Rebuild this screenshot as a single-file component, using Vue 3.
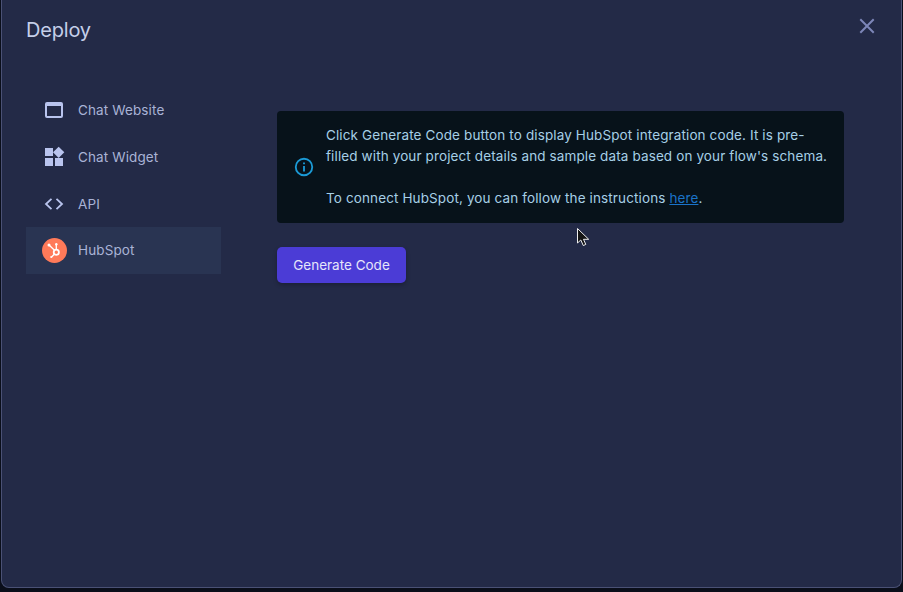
<template>
  <div class="backdrop">
    <section class="modal">
      <header class="head">
        <h2 class="title">Deploy</h2>
        <button class="close" aria-label="Close">
          <svg width="24" height="24" viewBox="0 0 24 24" fill="none" stroke="#7d86b8" stroke-width="2" stroke-linecap="square"><path d="M6 6 18 18M18 6 6 18" /></svg>
        </button>
      </header>
      <div class="body">
        <nav class="side">
          <a class="item">
            <span class="ico"><svg width="24" height="24" viewBox="0 0 24 24" fill="#b9c4ee"><path d="M5 4h14a2 2 0 0 1 2 2v12a2 2 0 0 1-2 2H5a2 2 0 0 1-2-2V6a2 2 0 0 1 2-2Zm0 4v10h14V8H5Z" /></svg></span>
            <span>Chat Website</span>
          </a>
          <a class="item">
            <span class="ico"><svg width="24" height="24" viewBox="0 0 24 24" fill="#b9c4ee"><path d="M3 3h8v8H3zM3 13h8v8H3zM13 13h8v8h-8zM16.66 1.69l5.66 5.65L16.66 13 11 7.34z" /></svg></span>
            <span>Chat Widget</span>
          </a>
          <a class="item">
            <span class="ico"><svg width="24" height="24" viewBox="0 0 24 24" fill="none" stroke="#b9c4ee" stroke-width="1.8"><path d="M9.500 6.800 4 12l5.500 5.200M14.500 6.800 20 12l-5.500 5.200" /></svg></span>
            <span>API</span>
          </a>
          <a class="item active">
            <span class="ico hub"><svg width="25" height="25" viewBox="0 0 25 25"><circle cx="12.500" cy="12.500" r="12.500" fill="#ff7a59" /><g stroke="#fff" fill="none"><circle cx="14.300" cy="14.200" r="2.600" stroke-width="1.800" /><path d="M7.500 7.500l5 4.800M14.300 6.500v5M12.300 16.200 9.800 18.700" stroke-width="1.300" /></g><g fill="#fff"><circle cx="7" cy="7" r="1.500" /><circle cx="14.300" cy="6.300" r="1.200" /><circle cx="9.300" cy="19" r="1.100" /></g></svg></span>
            <span>HubSpot</span>
          </a>
        </nav>
        <main class="content">
          <div class="alert">
            <svg class="info" width="22" height="22" viewBox="0 0 24 24" fill="#1b9ad6"><path d="M11 7h2v2h-2zm0 4h2v6h-2zm1-9a10 10 0 1 0 0 20 10 10 0 0 0 0-20Zm0 18a8 8 0 1 1 0-16 8 8 0 0 1 0 16Z" /></svg>
            <div class="msg">
              <p>Click Generate Code button to display HubSpot integration code. It is pre-filled with your project details and sample data based on your flow's schema.</p>
              <p>To connect HubSpot, you can follow the instructions <a class="link">here</a>.</p>
            </div>
          </div>
          <button class="gen">Generate Code</button>
        </main>
      </div>
    </section>
    <svg class="cursor" width="15" height="21" viewBox="0 0 15 21"><path d="M1.500 1.500V16l3.300-3 2.500 5.600 2.500-1.200-2.300-5.100h5.200Z" fill="#151515" stroke="#eee" stroke-width="1" /></svg>
  </div>
</template>

<script setup>
</script>

<style>
html, body { margin: 0; background: #0b0f1c; }
</style>

<style scoped>
.backdrop {
  position: relative;
  width: 903px;
  height: 592px;
  overflow: hidden;
  background: #0a0e1a;
  font-family: Inter, "Liberation Sans", sans-serif;
}
.modal {
  box-sizing: border-box;
  width: 901px;
  height: 588px;
  margin-left: 1px;
  background: #232a47;
  border: 1px solid #4a5175;
  border-top: 0;
  border-radius: 0 0 8px 8px;
  display: flex;
  flex-direction: column;
}
.head {
  display: flex;
  justify-content: space-between;
  align-items: flex-start;
  padding: 19px 22px 0 24px;
  height: 87px;
  box-sizing: border-box;
  flex: none;
}
.title {
  margin: 0;
  font-size: 20px;
  font-weight: 400;
  line-height: 22px;
  color: #c5cfe9;
  letter-spacing: -0.2px;
}
.close {
  padding: 0;
  border: 0;
  background: none;
  width: 24px;
  height: 24px;
  margin-top: -5px;
}
.close svg { display: block; }
.body {
  display: flex;
  flex: 1;
}
.side {
  width: 195px;
  margin-left: 24px;
  flex: none;
  display: flex;
  flex-direction: column;
}
.item {
  height: 46.67px;
  display: flex;
  align-items: center;
  padding-left: 16px;
  gap: 12px;
  font-size: 13.5px;
  letter-spacing: 0.12px;
  color: #a9b3d6;
}
.item.active { background: #293452; }
.ico {
  width: 25px;
  height: 25px;
  display: flex;
  align-items: center;
  justify-content: center;
  margin-left: -1px;
}
.ico.hub { margin-left: 0; margin-right: -1px; }
.ico svg { display: block; }
.content {
  margin-left: 56px;
  width: 567px;
  padding-top: 24px;
}
.alert {
  display: flex;
  align-items: center;
  box-sizing: border-box;
  height: 112px;
  background: #07121a;
  border-radius: 4px;
  padding-left: 16px;
  gap: 11px;
}
.info { flex: none; margin-top: -1px; }
.msg {
  font-size: 13.5px;
  line-height: 21px;
  letter-spacing: 0.12px;
  color: #a6cfe6;
  width: 510px;
}
.msg p { margin: 0; }
.msg p + p { margin-top: 21px; }
.link { color: #1a73c9; text-decoration: underline; }
.gen {
  display: block;
  margin-top: 24px;
  width: 129px;
  height: 36px;
  border: 0;
  border-radius: 5px;
  background: #4b3cd6;
  color: #e6e6fa;
  font: 400 13.5px Inter, "Liberation Sans", sans-serif;
  box-shadow: 0 2px 4px rgba(0, 0, 0, 0.25);
}
.cursor {
  position: absolute;
  left: 576px;
  top: 227px;
}
</style>
